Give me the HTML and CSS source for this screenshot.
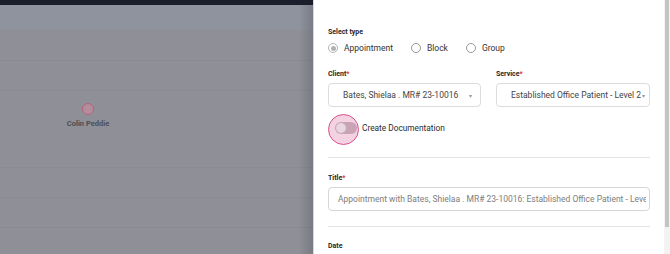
FILE: index.html
```html
<!DOCTYPE html>
<html lang="en">
<head>
  <meta charset="UTF-8">
  <meta name="viewport" content="width=device-width, initial-scale=1.0">
  <title>New Appointment</title>
  <link rel="stylesheet" href="styles.css">
</head>
<body>
  <div class="backdrop">
    <div class="topbar"></div>
    <div class="toolbar"></div>
    <div class="grid-row"></div>
    <div class="grid-row"></div>
    <div class="grid-row tall">
      <div class="provider">
        <span class="avatar"></span>
        <span class="provider-name">Colin Peddie</span>
      </div>
    </div>
    <div class="grid-row"></div>
    <div class="grid-row"></div>
    <div class="grid-row"></div>
    <div class="edge-shadow"></div>
  </div>

  <div class="drawer">
    <div class="drawer-body">
      <div class="field-label">Select type</div>
      <div class="radio-group">
        <label class="radio"><span class="radio-dot checked"></span>Appointment</label>
        <label class="radio"><span class="radio-dot"></span>Block</label>
        <label class="radio"><span class="radio-dot"></span>Group</label>
      </div>

      <div class="field-row">
        <div class="field">
          <div class="field-label">Client<span class="req">*</span></div>
          <div class="select client-select">
            <span class="select-value">Bates, Shielaa . MR# 23-10016</span>
            <span class="caret">&#9662;</span>
          </div>
        </div>
        <div class="field">
          <div class="field-label">Service<span class="req">*</span></div>
          <div class="select service-select">
            <span class="select-value">Established Office Patient - Level 2</span>
            <span class="caret">&#9662;</span>
          </div>
        </div>
      </div>

      <div class="toggle-row">
        <div class="switch">
          <span class="switch-halo"></span>
          <span class="switch-track"></span>
          <span class="switch-knob"></span>
        </div>
        <span class="toggle-text">Create Documentation</span>
      </div>

      <div class="divider"></div>

      <div class="field-label title-label">Title<span class="req">*</span></div>
      <div class="text-input"><span class="input-value">Appointment with Bates, Shielaa . MR# 23-10016: Established Office Patient - Level 2</span></div>

      <div class="divider second"></div>

      <div class="field-label date-label">Date</div>
    </div>
    <div class="scrollbar">
      <div class="scroll-thumb"></div>
    </div>
  </div>
</body>
</html>
```

FILE: styles.css
```css
* {
  box-sizing: border-box;
}

body {
  margin: 0;
  padding: 0;
  width: 670px;
  height: 254px;
  overflow: hidden;
  display: flex;
  font-family: Roboto, "Liberation Sans", Arial, sans-serif;
  background: #ffffff;
}

/* dimmed calendar behind the drawer */
.backdrop {
  width: 313px;
  flex-shrink: 0;
  height: 254px;
  background: #8f9097;
  position: relative;
  overflow: hidden;
}

.topbar {
  height: 5px;
  background: #1c1f2b;
}

.toolbar {
  height: 25px;
  background: #8f939d;
}

.grid-row {
  height: 30px;
  border-bottom: 1px solid #898b92;
}

.grid-row:nth-child(3) {
  height: 31px;
}

.grid-row.tall {
  height: 77px;
  display: flex;
  padding-left: 58px;
  padding-top: 12px;
}

.provider {
  width: 60px;
  display: flex;
  flex-direction: column;
  align-items: center;
  gap: 4px;
}

.avatar {
  width: 12px;
  height: 12px;
  border-radius: 50%;
  background: #b48c9c;
  border: 1px solid #b8617f;
}

.provider-name {
  font-size: 7.5px;
  font-weight: 700;
  color: #4b4e56;
  white-space: nowrap;
}

.edge-shadow {
  position: absolute;
  top: 5px;
  right: 0;
  width: 14px;
  height: 249px;
  background: linear-gradient(to right, rgba(80, 82, 90, 0), rgba(80, 82, 90, 0.35));
}

/* drawer */
.drawer {
  width: 357px;
  flex-shrink: 0;
  height: 254px;
  display: flex;
  background: #ffffff;
  border-left: 1px solid #d8d9dc;
}

.drawer-body {
  flex: 1;
  min-width: 0;
  padding: 26px 14px 0 14px;
}

.field-label {
  font-size: 7px;
  line-height: 12px;
  font-weight: 700;
  color: #262626;
  margin-bottom: 2px;
}

.req {
  color: #e0303a;
}

.radio-group {
  display: flex;
  height: 16px;
  align-items: center;
}

.radio {
  display: flex;
  align-items: center;
  font-size: 8.5px;
  color: #333;
}

.radio + .radio {
  margin-left: 18px;
}

.radio-dot {
  width: 10px;
  height: 10px;
  border-radius: 50%;
  border: 1px solid #9a9a9a;
  margin-right: 6px;
  display: flex;
  align-items: center;
  justify-content: center;
}

.radio-dot.checked {
  border-color: #b5b5b5;
}

.radio-dot.checked::after {
  content: "";
  width: 5px;
  height: 5px;
  border-radius: 50%;
  background: #b2b2b2;
}

.field-row {
  display: flex;
  justify-content: space-between;
  margin-top: 12px;
}

.field .field-label {
  margin-bottom: 3px;
}

.select {
  height: 24px;
  border: 1px solid #dcdcdc;
  border-radius: 4px;
  display: flex;
  align-items: center;
  font-size: 8.5px;
  color: #444;
}

.client-select {
  width: 153px;
  padding: 0 8px 0 14px;
}

.service-select {
  width: 154px;
  padding: 0 4px 0 14px;
}

.select-value {
  flex: 1;
  white-space: nowrap;
  overflow: hidden;
}

.caret {
  font-size: 6px;
  color: #999;
}

.toggle-row {
  display: flex;
  align-items: center;
  margin-top: 7px;
  height: 31px;
}

.switch {
  width: 34px;
  height: 31px;
  position: relative;
}

.switch-halo {
  position: absolute;
  left: 0;
  top: 0;
  width: 31px;
  height: 31px;
  border-radius: 50%;
  background: #f4d2e2;
  border: 1.5px solid #d4548e;
}

.switch-track {
  position: absolute;
  left: 7px;
  top: 8px;
  width: 22px;
  height: 12px;
  border-radius: 6px;
  background: #c9a3b6;
}

.switch-knob {
  position: absolute;
  left: 8px;
  top: 9px;
  width: 10px;
  height: 10px;
  border-radius: 50%;
  background: #ead6df;
}

.toggle-text {
  font-size: 8.3px;
  color: #2b2b2b;
  margin-top: -3px;
}

.divider {
  height: 1px;
  background: #e3e3e3;
  margin-top: 12px;
}

.title-label {
  margin-top: 14px;
  margin-bottom: 3px;
}

.text-input {
  height: 24px;
  border: 1px solid #d6d6d6;
  border-radius: 4px;
  padding: 0 3px 0 9px;
  display: flex;
  align-items: center;
  font-size: 8.5px;
  color: #7d7d7d;
}

.input-value {
  flex: 1;
  min-width: 0;
  white-space: nowrap;
  overflow: hidden;
  text-overflow: clip;
}

.divider.second {
  margin-top: 15px;
}

.date-label {
  margin-top: 13px;
}

.scrollbar {
  width: 6px;
  background: #f3f3f3;
  padding: 0 1px;
}

.scroll-thumb {
  height: 227px;
  background: #c4c4c4;
}
```
